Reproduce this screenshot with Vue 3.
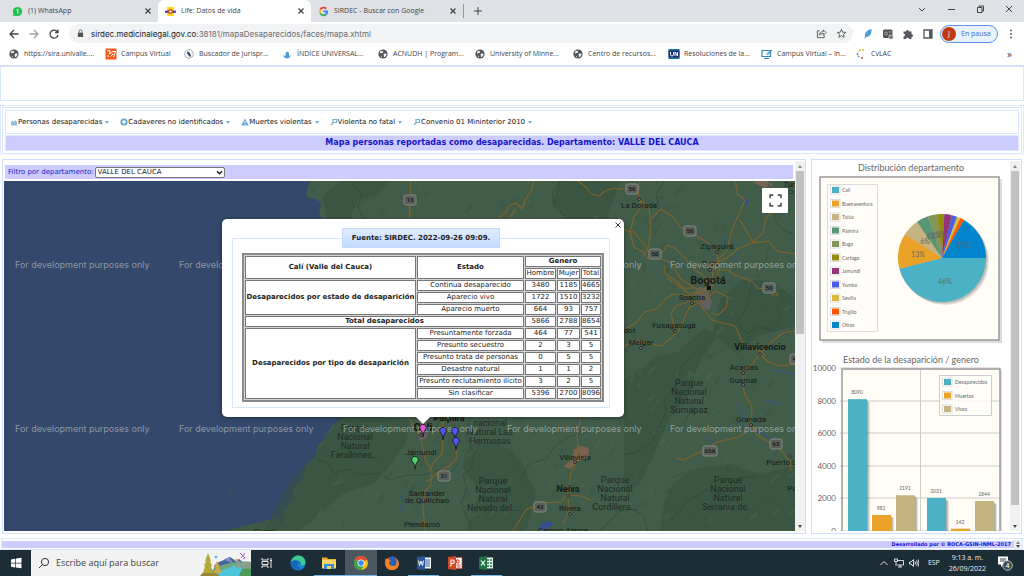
<script setup>
import { ref } from 'vue'

const tabs = [
  { title: '(1) WhatsApp', icon: 'wa' },
  { title: 'Life: Datos de vida', icon: 'life', active: true },
  { title: 'SIRDEC - Buscar con Google', icon: 'google' },
]

const bookmarks = [
  { t: 'https://sira.univalle....', i: 'globe' },
  { t: 'Campus Virtual', i: 'campus' },
  { t: 'Buscador de Jurispr...', i: 'court' },
  { t: 'ÍNDICE UNIVERSAL...', i: 'un' },
  { t: 'ACNUDH | Program...', i: 'globe' },
  { t: 'University of Minne...', i: 'globe' },
  { t: 'Centro de recursos...', i: 'globe' },
  { t: 'Resoluciones de la...', i: 'unbox' },
  { t: 'Campus Virtual – In...', i: 'screen' },
  { t: 'CvLAC', i: 'cvlac' },
]

const menu = [
  { t: 'Personas desaparecidas', i: 'home' },
  { t: 'Cadaveres no identificados', i: 'plus' },
  { t: 'Muertes violentas', i: 'alert' },
  { t: 'Violenta no fatal', i: 'find' },
  { t: 'Convenio 01 Mininterior 2010', i: 'find' },
]

const departamento = ref('VALLE DEL CAUCA')

const estados = [
  ['Continua desaparecido', 3480, 1185, 4665],
  ['Aparecio vivo', 1722, 1510, 3232],
  ['Aparecio muerto', 664, 93, 757],
]
const tipos = [
  ['Presuntamente forzada', 464, 77, 541],
  ['Presunto secuestro', 2, 3, 5],
  ['Presunto trata de personas', 0, 5, 5],
  ['Desastre natural', 1, 1, 2],
  ['Presunto reclutamiento ilícito', 3, 2, 5],
  ['Sin clasificar', 5396, 2700, 8096],
]

const roads = [
  'M410 181l1 12-2 14 3 14M410 207l-1 12',
  'M534 181l-3 10-6 9-3 9-6-6-6 2-4 7-10 8M508 219l8-10',
  'M578 181l8 6 5 7 8 2 6-5 9-3 6 1 12 0 9-3',
  'M640 181l-2 14 3 12-7 10-4 14 4 16 9 5 6 8M640 200l9 8 2 22-3 18-5 8',
  'M651 219l10-10 12 8 8 11 10 4 9 6 7 4 9 10 4 15-3 11-6 10-9 5-14 0-15-11-6-4',
  'M624 230l10 2 9 11 8 11 10 5 10 4 10 16 12 8 8 3',
  'M661 254l7-9 8 4 10 10 7 9 12 9 3 8',
  'M665 266l-1 7 12 8 8 7 11 0',
  'M735 181l3 14 7 5-8 18-6 14-4 19-9 8-5 12-1 14-7 16',
  'M740 220l6 10 7 12 10-9 2-13 6-8 8-3 1-14',
  'M795 254l-18-3-8-10-16 2-14 5-12 10-15 6',
  'M718 270l10 0 7 5 11 4 7 3 5 7 14-2 6 8-7 0',
  'M624 330l13-8 8-10 12-3 9-11 9-4 13 2 15-6 4-5',
  'M624 346l14-5 12 3 11 2 9-7 9-9 10-22 15-8',
  'M675 329l-4-15 5-8 12-4 10-1 6 9 8 10 14 4 9 2 8 17 10 4 8 5 4 4',
  'M706 300l9-9 13 6-2 11-8 7-7-2',
  'M760 354l8 8 12 4 15-2M762 352l9-10 12-9 12-2',
  'M760 354l-8 10-9 6 0 15 2 10 7 12-1 17-10 12-15 4-11 3-8 7-14 5-9 5-8-2',
  'M751 425l6 10 10 6 14 9 9 11 1 10',
  'M421 418l0 8 1 16 3 17 7 12-1 14-6 6-2 17 3 28',
  'M443 438l-1 16-8 8-5 9M456 448l1 10-8 8-11 6-8 8-4 1',
  'M581 417l-4 18 2 21-8 17-3 20-7 9-21 1-14 7-10 16-7 11M568 495l14 1 9 4M568 495l1 15-6 14',
  'M408 417l5 8 7 10M444 417l-3 18',
]
const minor = [
  'M318 460l10 3 6 10 14-4 12 6 18-2 12 7 16-5 18 0 16-5 10 4 8-10',
  'M470 417l-4 20 8 15-2 16-9 8 4 12-6 15 10 25',
  'M624 455l12-3 16-10 8-17 6-12-1-15 9-9 8-22 10-12',
  'M600 531l20-20 12-2 12 7 4 16',
  'M520 481l10-18 16-4 10-14 14-9 15-3',
  'M768 181l4 17 6 7-4 14 8 10 13 6',
  'M664 181l-8 14 4 18-10 14 6 8',
  'M795 290l-19 18 5 10-9 12-15-4-10 8-10-12 10-14 3-18',
  'M560 181l-8 12 3 14 12 12',
  'M350 181l12 14-4 12 6 12',
  'M672 520l14-18 20-12 22 6 12-18 18-2',
]
const dark = [
  'M385 417l25 4-4 22-14 20-18 20-30 10-44 38h-36l24-46 30-34 22-34z',
  'M340 181h50l-12 14-20 5-8 19h-22l-6-22z',
  'M624 380l34-24 20-4 26-24 14 8-20 28-8 30-20 24-16 36-14 30-16 8z',
  'M470 445l26-4 24 18 16 34-10 38h-60l14-40-18-24z',
  'M690 470l40-6 30 10 35-8v65h-135l6-40z',
  'M720 300l22-20 26 0 27 18v28l-38 10-20 18-24-20z',
  'M560 181h60l-14 38h-40l-14-16z',
]
const water = ['M722 246l4-9 5-5', 'M733 262l4-6 2-6', 'M737 424l8-7-9-15', 'M756 430l22 12', 'M740 425l16 7', 'M771 370l24 4', 'M765 400l16 4', 'M706 438l10 5', 'M402 496l2 7-4 6 2 2', 'M630 262l3 5', 'M580 417l-2 6', 'M688 236l4-5']

/* Deterministic pseudo-random relief strokes for the terrain */
let seed = 17
const rnd = () => {
  seed = (seed * 16807) % 2147483647
  return seed / 2147483647
}
const relief = Array.from({ length: 420 }, () => {
  const x = Math.round(310 + rnd() * 480)
  const y = Math.round(181 + rnd() * 345)
  const w = Math.round(2 + rnd() * 6)
  const h = Math.round(2 + rnd() * 8)
  return { d: `M${x} ${y}l${w} -${h}l2 2l-${w} ${h}z`, c: rnd() > 0.72 ? 'hi' : rnd() > 0.4 ? 'lo' : 'mid' }
})

const places = [
  ['La Dorada', 639, 208], ['Zipaquirá', 717, 249], ['Chía', 710, 266], ['Soacha', 692, 300], ['Fusagasugá', 674, 328],
  ['Girardot', 621, 333], ['Melgar', 641, 345], ['Acacías', 744, 370], ['Guamal', 743, 383],
  ['Granada', 751, 422], ['Puerto López', 790, 465], ['Villavieja', 575, 460], ['Rivera', 570, 511],
  ['Campo Alegre', 563, 533], ['Jamundí', 421, 455], ['Santander', 427, 496], ['de Quilichao', 427, 503],
  ['Piendamó', 422, 527], ['Guapi', 264, 534], ['Tunja', 793, 187], ['Puerto Rico', 808, 491],
]
const cities = [['Bogotá', 708, 284, 'xl'], ['Cali', 423, 431, 'xl'], ['Villavicencio', 760, 350, 'lg'], ['Neiva', 568, 492, 'lg'], ['Palmira', 449, 421, 'lg']]
const parks = [
  { x: 689, y: 386, l: ['Parque', 'Nacional', 'Natural', 'Sumapaz'] },
  { x: 728, y: 483, l: ['Parque', 'Nacional', 'Natural', 'Serranía de...'] },
  { x: 615, y: 483, l: ['Parque', 'Nacional', 'Natural', 'Cordillera...'] },
  { x: 493, y: 484, l: ['Parque', 'Nacional', 'Natural', 'Nevado del...'] },
  { x: 355, y: 431, l: ['Parque', 'Nacional', 'Natural', 'Farallones...'] },
  { x: 490, y: 426, l: ['nacional', 'Natural Las', 'Hermosas'] },
]
const shields = [['13', 410, 200], ['56', 632, 189], ['56', 690, 231], ['50', 655, 254], ['50', 769, 288], ['65', 776, 444], ['65A', 710, 451], ['31', 444, 476], ['43', 540, 507], ['40', 796, 359]]
const dots = [[639, 199], [717, 252], [710, 270], [692, 303], [675, 331], [641, 348], [743, 373], [743, 385], [751, 425], [760, 354], [568, 496], [570, 514], [575, 462], [421, 435], [791, 192], [790, 456]]
const marks = [15, 179, 343, 507, 670]
const pins = [['#43c95c', 448, 423], ['#5457ef', 443, 440], ['#5457ef', 455, 440], ['#5457ef', 456, 450], ['#4fd06b', 415, 469], ['#e254d8', 423, 437]]

const ciudades = [
  ['Cali', '#4bb2c5', 166], ['Buenaventura', '#eaa228', 46.5], ['Tulúa', '#c5b47f', 23], ['Palmira', '#579575', 16],
  ['Buga', '#839557', 12], ['Cartago', '#958c12', 9.5], ['Jamundí', '#953579', 10], ['Yumbo', '#4b5de4', 7],
  ['Sevilla', '#d8b83f', 5], ['Trujillo', '#ff5800', 5], ['Otros', '#0085cc', 60],
]
const point = (a, r) => `${(942 + r * Math.cos((a * Math.PI) / 180)).toFixed(2)} ${(258 + r * Math.sin((a * Math.PI) / 180)).toFixed(2)}`
let angle = 0
const slices = ciudades.map(([name, color, size]) => {
  const from = angle
  angle += size
  return { name, color, d: `M942 258L${point(from, 44)}A44 44 0 0 1 ${point(angle, 44)}Z` }
})
const percents = [['46%', 945, 284], ['13%', 918, 257], ['6%', 925, 244], ['4%', 931, 239], ['3%', 936, 238], ['3%', 941, 237], ['17%', 963, 248]]

const axis = [10000, 8000, 6000, 4000, 2000, 0]
const yOf = (v) => 531 - v * 0.0163
const bars = [
  [8090, 848, '#4bb2c5'], [982, 872, '#eaa228'], [2191, 896, '#c5b47f'],
  [2031, 927, '#4bb2c5'], [142, 951, '#eaa228'], [1844, 975, '#c5b47f'],
]
const series = [['Desaparecidos', '#4bb2c5'], ['Muertos', '#eaa228'], ['Vivos', '#c5b47f']]
</script>

<template>
  <div class="screen">
    <header class="browser">
      <div class="tabs">
        <div v-for="t in tabs" :key="t.title" class="tab" :class="{ active: t.active }">
          <svg class="fav" viewBox="0 0 12 12" aria-hidden="true">
            <g v-if="t.icon === 'wa'"><circle cx="6" cy="6" r="5" fill="#1fbf4e" /><path d="M1 11l1-4 3 3z" fill="#1fbf4e" /><path d="M5 4.500L6.400 3.500V8.600" stroke="#fff" fill="none" /></g>
            <g v-else-if="t.icon === 'life'"><path d="M2 1h8v10H2z" fill="#fcd91c" /><path d="M0 5h12v2.500H0z" fill="#5348a0" /><circle cx="6" cy="6" r="2.600" fill="#e2452f" /><circle cx="6" cy="6" r="1.200" fill="#fff" /></g>
            <g v-else fill="none" stroke-width="2"><path d="M9 3A4 4 0 0 0 2.500 4" stroke="#ea4335" /><path d="M2.500 4a4 4 0 0 0 0 4" stroke="#fbbc05" /><path d="M2.500 8A4 4 0 0 0 8.500 9.200" stroke="#34a853" /><path d="M8.500 9.200A4 4 0 0 0 10 6H6" stroke="#4285f4" /></g>
          </svg>
          <span>{{ t.title }}</span>
          <button class="plain x" aria-label="Cerrar pestaña"><svg viewBox="0 0 8 8"><path d="M2 2l4 4M6 2L2 6" /></svg></button>
        </div>
        <button class="plain new" aria-label="Nueva pestaña"><svg viewBox="0 0 10 10"><path d="M5 1v8M1 5h8" /></svg></button>
        <div class="wincontrols">
          <button class="plain" aria-label="Buscar pestañas"><svg viewBox="0 0 10 10"><path d="M2 4l3 3 3-3" /></svg></button>
          <button class="plain" aria-label="Minimizar"><svg viewBox="0 0 10 10"><path d="M2 5.500h7" /></svg></button>
          <button class="plain" aria-label="Restaurar"><svg viewBox="0 0 10 10"><path d="M2.500 3.500h4.500v5h-4.500zM4 3.500V2h4.500v5H7" /></svg></button>
          <button class="plain" aria-label="Cerrar"><svg viewBox="0 0 10 10"><path d="M2 2l6 6M8 2L2 8" /></svg></button>
        </div>
      </div>
      <div class="toolbar">
        <button class="plain nav" aria-label="Atrás"><svg viewBox="0 0 12 12"><path d="M10.500 6H2M6 2L2 6l4 4" /></svg></button>
        <button class="plain nav off" aria-label="Adelante"><svg viewBox="0 0 12 12"><path d="M1.500 6H10M6 2l4 4-4 4" /></svg></button>
        <button class="plain nav" aria-label="Recargar"><svg viewBox="0 0 12 12"><path d="M9.600 4.200A4 4 0 1 0 10 7M10 1.500v3H7" /></svg></button>
        <div class="address">
          <svg class="lock" viewBox="0 0 8 10"><path d="M1 4h6v5H1z" fill="#555" /><path d="M2.300 4V2.500a1.700 1.700 0 0 1 3.400 0V4" fill="none" stroke="#555" /></svg>
          <span class="url"><b>sirdec.medicinalegal.gov.co</b>:38181/mapaDesaparecidos/faces/mapa.xhtml</span>
          <svg class="ic" viewBox="0 0 12 12"><path d="M4 3H1.500v7.500H9V8M3.500 8c0-3 2-4 4.500-4V2l3 3-3 3V6C6 6 4.500 6.500 3.500 8z" /></svg>
          <svg class="ic star" viewBox="0 0 12 12"><path d="M6 1.500l1.300 3.100 3.300.2-2.500 2.200.8 3.200L6 8.400 3.100 10.200l.8-3.200L1.400 4.800l3.300-.2z" /></svg>
        </div>
        <div class="extensions">
          <svg viewBox="0 0 12 12"><path d="M9.500 1C5 2 2.500 5 3 8.500L2 11l2-2c3.500 0 6-3 5.500-8z" fill="#4a9fd6" /></svg>
          <svg viewBox="0 0 12 12"><rect x="1" y="1.500" width="9.500" height="8.500" rx="1.500" fill="#4d5054" /><circle cx="4" cy="5.500" r="1.500" fill="none" stroke="#ccc" stroke-width=".7" /><path d="M6.500 4h3M7 7h4v4H7z" stroke="#ddd" stroke-width=".7" fill="#777" /></svg>
          <svg viewBox="0 0 12 12"><path d="M1.500 3.500H4a1.500 1.500 0 1 1 3 0h2.500V6a1.500 1.500 0 1 1 0 3v2H7a1.500 1.500 0 0 0-3 0H1.500V8.500a1.500 1.500 0 0 0 0-3z" fill="#55585c" /></svg>
          <svg viewBox="0 0 12 12"><path d="M2 2h8v8H2z" fill="#fff" stroke="#55585c" stroke-width="1.300" /><path d="M7 2h3v8H7z" fill="#55585c" /></svg>
        </div>
        <button class="profile"><i>J</i><span>En pausa</span></button>
        <button class="plain dots" aria-label="Menú"><svg viewBox="0 0 4 12"><g fill="#555"><circle cx="2" cy="2.500" r=".9" /><circle cx="2" cy="6" r=".9" /><circle cx="2" cy="9.500" r=".9" /></g></svg></button>
      </div>
      <nav class="bookmarks">
        <a v-for="(b, n) in bookmarks" :key="n" href="#">
          <svg viewBox="0 0 12 12" aria-hidden="true">
            <g v-if="b.i === 'globe'"><circle cx="6" cy="6" r="4.600" fill="#505357" /><path d="M3 3.500l2-.8 1.500 1-1 1.300H4l-.8 1zM6.500 6l2-.8 1.200 1-1.200 2.300-1.500.8zM3.500 7.500l1.500.8v1.500z" fill="#eee" /></g>
            <g v-else-if="b.i === 'campus'"><path d="M.5.5h11v11H.5z" fill="#f4591c" /><path d="M2 3l3-.5L4.500 6 8 3.500h2.500L8.500 9M5.500 8.500L8 6M2 8h2" stroke="#fff" stroke-width="1" fill="none" /></g>
            <g v-else-if="b.i === 'court'"><circle cx="6" cy="6" r="4.400" fill="#f4f5f7" stroke="#9aa3ae" stroke-width=".8" /><path d="M4 3.500l2.500 1 1.500 3.500-1 1L4.500 6z" fill="#29415e" /></g>
            <g v-else-if="b.i === 'un'"><path d="M2 7c1 2.500 2.200 3.500 4 3.500s3-1 4-3.500l-2 1V5L6.500 3.500 4.500 5v3z" fill="#4d9fd4" /></g>
            <g v-else-if="b.i === 'unbox'"><path d="M.5 1h11v10H.5z" fill="#177e85" /><path d="M.5 2.500h11v7H.5z" fill="#1c2c7c" /><path d="M2.500 4v2.500Q2.500 8 4 8T5.500 6.500V4M7 8V4l2.500 4V4" stroke="#fff" fill="none" /></g>
            <g v-else-if="b.i === 'screen'"><path d="M1 2.500h8.500v6H1zM3 10.500h5" fill="none" stroke="#2f88b5" stroke-width="1.200" /><path d="M5 6l5.500-4.500 1 1L7 7z" fill="#4ea5cf" /></g>
            <g v-else fill="none" stroke-width="1.500"><path d="M9 2A5 5 0 0 0 3 4" stroke="#e8b23a" stroke-dasharray="2 1" /><path d="M2.500 5a5 5 0 0 0 1.500 4" stroke="#5582c9" stroke-dasharray="2 1" /><path d="M6 10h3" stroke="#d9412b" stroke-dasharray="2 1" /></g>
          </svg>
          <span>{{ b.t }}</span>
        </a>
        <button class="plain more" aria-label="Más marcadores">»</button>
      </nav>
    </header>

    <main class="page">
      <div class="banner"></div>
      <section class="north">
        <div class="north-in">
          <nav class="menu">
            <a v-for="m in menu" :key="m.t" href="#">
              <svg viewBox="0 0 8 8" aria-hidden="true">
                <path v-if="m.i === 'home'" d="M1 4L2.500 2.500 4 4l1.500-2L7 4v3.500H1z" fill="#8fc0dc" />
                <g v-else-if="m.i === 'plus'"><circle cx="4" cy="4" r="3.600" fill="#5ea6cf" /><path d="M4 2v4M2 4h4" stroke="#fff" stroke-width="1.300" /></g>
                <g v-else-if="m.i === 'alert'"><path d="M4 .5L7.800 7.500H.2z" fill="#62a9d0" /><path d="M4 3v2M4 5.800v1" stroke="#fff" /></g>
                <path v-else d="M1 7l2.200-2.500M3 1.500h3.500v3H3z" stroke="#74b2d6" stroke-width="1.200" fill="none" />
              </svg>
              <span>{{ m.t }}</span>
              <i class="caret"></i>
            </a>
          </nav>
          <h1>Mapa personas reportadas como desaparecidas. Departamento: VALLE DEL CAUCA</h1>
        </div>
      </section>

      <div class="columns">
        <section class="panel left">
          <div class="body">
            <div class="filter">
              <label for="depto">Filtro por departamento:</label>
              <span class="pick">
                <select id="depto" v-model="departamento"><option>VALLE DEL CAUCA</option></select>
                <svg viewBox="0 0 8 6"><path d="M1 1.500l3 3 3-3" /></svg>
              </span>
            </div>
            <div class="map">
              <svg class="canvas" viewBox="4 181 791 350" preserveAspectRatio="xMidYMid slice">
                <path d="M4 181h791v350H4z" fill="#34486b" />
                <path d="M310 181l-3 9-1 7 10 2 5 4-2 10 4 10 6 40-8 50 16 60 8 44-12 8-8 14-7 7-3 12-8 6-5 16-9 8 1 12-9 8-3 15-8 6-12 1-3 7h-12H795V181z" fill="#425c4a" />
                <path d="M222 531l18-4 40-10v14zM228 492l3-4-1 6z" fill="#3e5846" />
                <path v-for="(d, n) in dark" :key="'k' + n" :d="d" fill="#37503f" opacity=".6" />
                <path v-for="(r, n) in relief" :key="'r' + n" :d="r.d" class="relief" :class="r.c" />
                <path d="M698 287l8 1 6 14-3 9-7-4-3-9-7-3z" fill="#606061" /><path d="M753 182l14-2 6 5-9 3z M574 450l6-4 9 2-1 10-11 4-7 7-6-3 8-7z" fill="#786450" />
                <path d="M419 424l10 2-2 12-8 3z" fill="#606061" />
                <path v-for="(d, n) in water" :key="'w' + n" :d="d" class="water" />
                <path d="M743 198l6 2-1 5-4-1zM540 525l6-4 8 2-4 4-9 3z" fill="#35518c" />
                <path v-for="(d, n) in minor" :key="'m' + n" :d="d" class="minor" />
                <path v-for="(d, n) in roads" :key="'d' + n" :d="d" class="road" />
                <circle v-for="(c, n) in dots" :key="'c' + n" :cx="c[0]" :cy="c[1]" r="1.500" class="town" />
                <path d="M707 286h4v4h-4z" fill="#111" />
                <g v-for="(s, n) in shields" :key="'s' + n">
                  <rect :x="s[1] - (s[0].length > 2 ? 7 : 6)" :y="s[2] - 5" :width="s[0].length > 2 ? 14 : 12" height="10" rx="2" class="shield" />
                  <text :x="s[1]" :y="s[2] + 2" class="num">{{ s[0] }}</text>
                </g>
                <text v-for="p in places" :key="p[0]" :x="p[1]" :y="p[2]" class="place">{{ p[0] }}</text>
                <text v-for="c in cities" :key="c[0]" :x="c[1]" :y="c[2]" class="place" :class="c[3]">{{ c[0] }}</text>
                <g v-for="(p, n) in parks" :key="'p' + n">
                  <text v-for="(l, k) in p.l" :key="k" :x="p.x" :y="p.y + k * 9" class="park">{{ l }}</text>
                </g>
                <template v-for="y in [268, 432]" :key="y">
                  <text v-for="x in marks" :key="x" :x="x" :y="y" class="mark">For development purposes only</text>
                </template>
                <path v-for="(p, n) in pins" :key="'i' + n" :d="`M${p[1]} ${p[2]}l-1-5-2-3a3.300 3.300 0 1 1 6 0l-2 3z`" :fill="p[0]" stroke="#111" stroke-width=".8" />
              </svg>

              <button class="full" aria-label="Pantalla completa"><svg viewBox="0 0 12 12"><path d="M1 4V1h3M8 1h3v3M11 8v3H8M4 11H1V8" /></svg></button>

              <div class="info">
                <button class="plain close" aria-label="Cerrar"><svg viewBox="0 0 8 8"><path d="M1.500 1.500l5 5M6.500 1.500l-5 5" /></svg></button>
                <fieldset>
                  <legend>Fuente: SIRDEC. 2022-09-26 09:09.</legend>
                  <table>
                    <colgroup><col class="c1" /><col class="c2" /><col class="c3" /><col class="c4" /><col class="c5" /></colgroup>
                    <tbody>
                      <tr><th rowspan="2">Calí (Valle del Cauca)</th><th rowspan="2">Estado</th><th colspan="3">Genero</th></tr>
                      <tr><td>Hombre</td><td>Mujer</td><td>Total</td></tr>
                      <tr v-for="(r, n) in estados" :key="r[0]">
                        <th v-if="n === 0" rowspan="3">Desaparecidos por estado de desaparición</th>
                        <td v-for="(c, k) in r" :key="k">{{ c }}</td>
                      </tr>
                      <tr><th colspan="2">Total desaparecidos</th><td>5866</td><td>2788</td><td>8654</td></tr>
                      <tr v-for="(r, n) in tipos" :key="r[0]">
                        <th v-if="n === 0" rowspan="6">Desaparecidos por tipo de desaparición</th>
                        <td v-for="(c, k) in r" :key="k">{{ c }}</td>
                      </tr>
                    </tbody>
                  </table>
                </fieldset>
              </div>
            </div>
          </div>
          <div class="scroll"><i class="up"></i><b class="half"></b><i class="down"></i></div>
        </section>

        <section class="panel right">
          <div class="body">
            <h2>Distribución departamento</h2>
            <svg class="chart" viewBox="812 175 198 178">
              <path d="M822 179h180v164h-180z" fill="#ddd" />
              <path d="M820 177h179v163H820z" fill="#fffdf6" stroke="#999" stroke-width="1.500" />
              <path d="M827.500 184.500h50v147h-50z" fill="#fffdf9" stroke="#ddd" />
              <g v-for="(s, n) in slices" :key="s.name">
                <rect x="830.500" :y="186 + n * 13.500" width="9.500" height="8" fill="#fff" stroke="#ddd" />
                <rect x="832" :y="187 + n * 13.500" width="7" height="6" :fill="s.color" />
                <text x="842" :y="192 + n * 13.500" class="tiny">{{ s.name }}</text>
              </g>
              <g fill="#000" fill-opacity=".1"><circle cx="943" cy="259" r="44" /><circle cx="944" cy="260" r="44" /><circle cx="945" cy="261" r="44" /></g>
              <path v-for="s in slices" :key="'s' + s.name" :d="s.d" :fill="s.color" />
              <text v-for="(p, n) in percents" :key="'t' + n" :x="p[1]" :y="p[2]" class="pct">{{ p[0] }}</text>
            </svg>
            <h2>Estado de la desaparición / genero</h2>
            <svg class="chart" viewBox="812 367 198 171">
              <path d="M844 371h158v167H844z" fill="#ddd" />
              <path d="M842 369h158v170H842z" fill="#fffdf6" />
              <g v-for="v in axis" :key="v">
                <path :d="`M840 ${Math.round(yOf(v))}H1000`" stroke="#ccc" />
                <text x="836" :y="yOf(v) + 3" class="axis">{{ v }}</text>
              </g>
              <path d="M920.500 369v162" stroke="#ccc" />
              <path d="M842 531V369h158v162" fill="none" stroke="#999" stroke-width="1.500" />
              <g v-for="b in bars" :key="b[0]">
                <g fill="#000" fill-opacity=".12"><rect v-for="k in 3" :key="k" :x="b[1] + k" :y="yOf(b[0]) + k" width="19" :height="531 - yOf(b[0])" /></g>
                <rect :x="b[1]" :y="yOf(b[0])" width="19" :height="531 - yOf(b[0])" :fill="b[2]" />
                <text :x="b[1] + 9" :y="yOf(b[0]) - 5" class="val">{{ b[0] }}</text>
              </g>
              <path d="M939.500 375.500h52v40h-52z" fill="#fffdf9" fill-opacity=".8" stroke="#ccc" />
              <g v-for="(s, n) in series" :key="s[0]">
                <rect x="942.500" :y="378 + n * 13.500" width="9.500" height="8" fill="#fff" stroke="#ddd" />
                <rect x="944" :y="379 + n * 13.500" width="7" height="6" :fill="s[1]" />
                <text x="955" :y="384 + n * 13.500" class="tiny">{{ s[0] }}</text>
              </g>
            </svg>
          </div>
          <div class="scroll"><i class="up"></i><b class="most"></b><i class="down"></i></div>
        </section>
      </div>

      <footer class="foot"><span>Desarrollado por © ROCA-GSIN-INML-2017</span><div class="spin"><i class="up"></i><i class="down"></i></div></footer>
    </main>

    <div class="taskbar">
      <button class="plain start" aria-label="Inicio"><svg viewBox="0 0 12 12"><path d="M1 2.400L5.300 1.700V5.700H1zM6 1.600L11.500.8V5.700H6zM1 6.400H5.300V10.400L1 9.700zM6 6.400H11.500V11.300L6 10.500z" fill="#fff" /></svg></button>
      <div class="search">
        <svg viewBox="0 0 12 12"><circle cx="7" cy="5" r="3.600" /><path d="M4.400 7.600L1 11" /></svg>
        <input type="text" placeholder="Escribe aquí para buscar" aria-label="Escribe aquí para buscar" />
        <svg class="scene" viewBox="200 551 51 25">
          <path d="M214 566c5-6 8-4 11-7l5-2 6 4 3-2 5 4 7 2v8h-37z" fill="#47639a" />
          <path d="M224 560l5-3 4 6zM237 559l4 4h-6z" fill="#7e91bd" />
          <path d="M212 570c10-7 26-9 39-8v14h-40z" fill="#6aa77c" /><path d="M232 566c8-5 14-5 19-4v6c-6 2-12 1-19-2z" fill="#8a9e8c" />
          <path d="M214 576c3-7 14-6 21-11 4 4-7 5-4 11z" fill="#4fc4dd" /><path d="M231 576c1-6 10-8 20-7v7z" fill="#4d9b57" /><path d="M214 576c4-6 18-6 26-9 4 2 0 5-1 9z" fill="#4fc4dd" />
          <path d="M200 576c3-5 9-6 16-3l4 3z" fill="#98843a" />
          <path d="M208 553l-3 8h1l-2 5h1l-2 7h10l-2-7h1l-2-5h1z" fill="#b3a83c" /><path d="M217 561l-3 7h2l-3 5h9l-3-6h1z" fill="#c9ab42" />
          <circle cx="216" cy="557" r="1.300" fill="#4bbbe4" /><circle cx="236" cy="560" r="1.300" fill="#f2b632" /><path d="M240 553l5 5M245 553l-4 5M243 559l2-1" stroke="#b259d1" />
        </svg>
      </div>
      <div class="apps">
        <button class="plain" aria-label="Vista de tareas"><svg viewBox="0 0 16 16"><path d="M3 3v2h6V3M3 13v-2h6v2M3 6.500h6v3H3zM12 3v10M11 5.500h2" fill="none" stroke="#e8e8e8" /></svg></button>
        <button class="plain" aria-label="Edge"><svg viewBox="0 0 16 16"><circle cx="8" cy="8" r="7.500" fill="#1583d2" /><path d="M1 7C2 2 6 .5 8 .5c5 0 7.500 3.500 7.500 6.500s-3 4-5 3.500c1-1 .5-5-3-5C4 5.500 2 7 1 7z" fill="#40c790" /><path d="M1 7c3-3 8-2 8 1-3 0-3 4 2 5.500C7 16 1.500 14 .5 8z" fill="#1665b8" /></svg></button>
        <button class="plain run" aria-label="Explorador de archivos"><svg viewBox="0 0 16 16"><path d="M1 2.500h5l1 1.500h8v9H1z" fill="#e9b23a" /><path d="M1 5h14v8.500H1z" fill="#fbd66b" /><path d="M3 9h10v5H3z" fill="#3a8fd1" /><path d="M6 11h4v3H6z" fill="#fbd66b" /></svg></button>
        <button class="plain run cur" aria-label="Chrome"><svg viewBox="0 0 16 16"><circle cx="8" cy="8" r="7" fill="#fbc116" /><path d="M8 8L1.900 4.500A7 7 0 0 1 14.100 4.500z" fill="#df4a37" /><path d="M8 8L1.900 4.500A7 7 0 0 0 8 15l3-5z" fill="#31a350" /><circle cx="8" cy="8" r="3.500" fill="#fff" /><circle cx="8" cy="8" r="2.700" fill="#4285f4" /></svg></button>
        <button class="plain" aria-label="Firefox"><svg viewBox="0 0 16 16"><circle cx="8" cy="8.500" r="6.800" fill="#e8581f" /><circle cx="8.500" cy="6.500" r="5" fill="#2f62b5" /><path d="M1.500 3.500C3 4 4 3.500 5 4c-.5 1 1 1.500 2.500 2-3 .5-3 2.500-1.500 4 2 1.800 5 1.200 6.200-.5 1-2 .3-5-.7-6.500 3 2 4 5 3 8-1.500 4-8 5.500-11.500 2C1 10.500.8 7 1.500 3.500z" fill="#f58220" /></svg></button>
        <button class="plain run" aria-label="Word"><svg viewBox="0 0 16 16"><path d="M7 2.500h8v11H7z" fill="#fff" /><path d="M9 5h5M9 7h5M9 9h5M9 11h5" stroke="#2b579a" /><path d="M1 2l8-1v14l-8-1z" fill="#2b579a" /><path d="M2.500 5.500l1 5L5 6l1.500 4.500 1-5" stroke="#fff" fill="none" /></svg></button>
        <button class="plain" aria-label="PowerPoint"><svg viewBox="0 0 16 16"><path d="M7 2.500h8v11H7z" fill="#fff" stroke="#d24726" stroke-width=".6" /><path d="M9.500 5h2.500v3H9.500zM9.500 10h4M9.500 12h4" stroke="#d24726" fill="none" /><path d="M1 2l8-1v14l-8-1z" fill="#d24726" /><path d="M4 11.500V5h1.500a1.700 1.700 0 0 1 0 3.500H4" stroke="#fff" fill="none" stroke-width="1.200" /></svg></button>
        <button class="plain run" aria-label="Excel"><svg viewBox="0 0 16 16"><path d="M7 2.500h8v11H7z" fill="#e8f1eb" /><path d="M9 5h2M12 5h2M9 8h2M12 8h2M9 11h2M12 11h2" stroke="#217346" stroke-width="1.500" /><path d="M1 2l8-1v14l-8-1z" fill="#217346" /><path d="M3 5.500l4 5M7 5.500l-4 5" stroke="#fff" stroke-width="1.200" /></svg></button>
      </div>
      <div class="tray">
        <svg viewBox="0 0 10 10"><path d="M1.500 7L5 3.500 8.500 7" /></svg>
        <svg viewBox="0 0 10 10"><path d="M3 2.500h6.500V7H3M6 7v2M4 9h4M.5 1h3v2.500h-3zM2 3.500V8" /></svg>
        <svg viewBox="0 0 10 10"><path d="M.5 4h1.500l2.500-2.500v7L2 6H.5zM6 3.500q1 1.500 0 3M7.500 2.500q2 2.500 0 5M9 1.500q2 3.500 0 7" /></svg>
        <span class="lang">ESP</span>
        <div class="clock"><span>9:13 a. m.</span><span>26/09/2022</span></div>
        <svg class="note" viewBox="0 0 16 16"><path d="M1 1.500h10v8H6L4 12V9.500H1z" fill="#fff" stroke="none" /><path d="M3 4h6M3 6h6" stroke="#1c2d36" /><circle cx="10.500" cy="10.500" r="4.800" fill="#3d4a52" stroke="#ddd" stroke-width=".8" /><text x="10.500" y="13">4</text></svg>
      </div>
    </div>
  </div>
</template>

<style>
html,
body {
  margin: 0;
  overflow: hidden;
}
</style>

<style scoped>
* {
  box-sizing: border-box;
}
.screen {
  height: 100vh;
  display: flex;
  flex-direction: column;
  background: #fff;
  font: 7px/10px "Open Sans", sans-serif;
  color: #444;
}
svg {
  display: block;
  flex: none;
}
a {
  color: inherit;
  text-decoration: none;
}
.plain {
  border: 0;
  padding: 0;
  margin: 0;
  background: none;
  color: inherit;
  font: inherit;
  display: grid;
  place-items: center;
}
.plain svg {
  fill: none;
  stroke: #444;
}

/* Browser chrome */
.browser {
  border-bottom: 1px solid #dcdde0;
}
.tabs {
  display: flex;
  height: 22px;
  background: #dee1e6;
}
.tab {
  width: 153px;
  display: flex;
  align-items: center;
  gap: 5px;
  padding: 0 5px 0 7px;
}
.tab:first-child {
  width: 158px;
  padding-left: 12px;
}
.tab:nth-child(3) {
  border-right: 1px solid #999;
  border-image: linear-gradient(transparent 5px, #999 5px, #999 17px, transparent 17px) 1;
}
.tab.active {
  background: #fff;
  border-radius: 6px 6px 0 0;
}
.tab span {
  flex: 1;
}
.fav {
  width: 11px;
  height: 11px;
}
.x svg {
  width: 10px;
  height: 10px;
}
.new {
  width: 28px;
}
.new svg,
.wincontrols svg {
  width: 10px;
  height: 10px;
}
.wincontrols {
  margin: 0 1px 0 auto;
  display: flex;
  height: 18px;
}
.wincontrols button {
  width: 29px;
}
.toolbar {
  display: flex;
  align-items: center;
  height: 23px;
  padding: 0 11px 0 8px;
}
.nav svg {
  width: 12px;
  height: 12px;
  stroke-width: 1.3;
}
.nav {
  width: 20px;
  justify-items: start;
}
.off {
  opacity: 0.5;
}
.address {
  flex: 1;
  display: flex;
  align-items: center;
  height: 19px;
  margin-left: 1px;
  padding: 0 6px 0 8px;
  border-radius: 10px;
  background: #f1f3f4;
}
.lock {
  width: 7px;
  height: 9px;
}
.url {
  flex: 1;
  margin-left: 7px;
  font: 8px/12px Inter, sans-serif;
  color: #6a6d71;
}
.url b {
  font-weight: 400;
  color: #222;
}
.ic {
  width: 11px;
  height: 11px;
  margin-left: 9px;
  fill: none;
  stroke: #555;
}
.extensions {
  display: flex;
  gap: 8px;
  margin: 0 6px 0 9px;
}
.extensions svg {
  width: 12px;
  height: 12px;
}
.profile {
  display: flex;
  align-items: center;
  gap: 5px;
  width: 58px;
  height: 18px;
  padding: 0 0 0 1px;
  border: 1px solid #5b95e6;
  border-radius: 9px;
  background: #e9f1fc;
  color: #3f6bc9;
  font: 7px/10px "Open Sans", sans-serif;
  white-space: nowrap;
}
.profile i {
  width: 14px;
  height: 14px;
  border-radius: 7px;
  background: #bf3a12;
  color: #fff;
  font-style: normal;
  line-height: 14px;
}
.dots {
  margin-left: 11px;
}
.dots svg {
  width: 4px;
  height: 12px;
  stroke: none;
}
.bookmarks {
  display: grid;
  grid-template-columns: 97px 78px 98px 96px 97px 98px 96px 93px 94px 1fr auto;
  align-items: center;
  height: 20px;
  padding: 0 12px 3px 8px;
}
.bookmarks a {
  display: flex;
  align-items: center;
  gap: 4px;
  white-space: nowrap;
}
.bookmarks svg {
  width: 12px;
  height: 12px;
}
.more {
  font-size: 10px;
}

/* Page */
.page {
  flex: 1;
  min-height: 0;
  display: flex;
  flex-direction: column;
  font-family: "DejaVu Sans", sans-serif;
}
.banner {
  height: 35px;
  border: 1px solid #d8e6ff;
}
.north {
  margin-top: 4px;
  padding: 1px;
  border: 1px solid #dfeaff;
  border-bottom: 0;
}
.north-in {
  padding: 2px;
  border: 1px solid #d8e6ff;
}
.menu {
  display: flex;
  align-items: center;
  gap: 10px;
  height: 24px;
  padding-left: 4px;
  border: 1px solid #d8e6ff;
  color: #111;
}
.menu a {
  display: flex;
  align-items: center;
  white-space: nowrap;
}
.menu svg {
  width: 8px;
  height: 8px;
}
.caret {
  margin: 0 1px 0 3px;
  border: 2px solid transparent;
  border-top: 3px solid #6fb0d6;
  border-bottom: 0;
}
h1 {
  margin: 1px 0 0;
  border: 1px solid #dde6ff;
  background: #ccccff;
  color: #1414cc;
  text-align: center;
  font-size: 8px;
  line-height: 14px;
}
.columns {
  flex: 1;
  min-height: 0;
  display: flex;
  gap: 5px;
  margin: 4px 2px 0;
}
.panel {
  display: flex;
  border: 1px solid #cfe0ff;
  overflow: hidden;
}
.left {
  flex: 1;
  padding: 1px 0 2px 1px;
}
.right {
  width: 211px;
  padding: 1px 1px 2px 0;
}
.body {
  flex: 1;
  min-width: 0;
  display: flex;
  flex-direction: column;
  overflow: hidden;
}
.filter {
  display: flex;
  align-items: center;
  gap: 1px;
  height: 14px;
  margin: 4px 2px 2px 1px;
  padding-left: 3px;
  background: #ccccff;
  color: #1c1cc8;
}
.pick {
  position: relative;
}
.pick select {
  appearance: none;
  display: block;
  width: 130px;
  height: 11px;
  padding: 0 2px;
  border: 1px solid #777;
  border-radius: 2px;
  background: #fff;
  color: #222;
  font: 7px/9px "DejaVu Sans", sans-serif;
}
.pick svg {
  position: absolute;
  right: 2px;
  top: 3px;
  width: 7px;
  height: 5px;
  fill: none;
  stroke: #111;
  stroke-width: 1.5;
}
.map {
  position: relative;
  flex: 1;
  min-height: 0;
  overflow: hidden;
}
.canvas {
  width: 100%;
  height: 100%;
}
.relief {
  opacity: 0.4;
}
.hi {
  fill: #56653f;
}
.mid {
  fill: #4a6652;
}
.lo {
  fill: #38523f;
}
.water {
  fill: none;
  stroke: #35518c;
}
.road {
  fill: none;
  stroke: #80622b;
  stroke-width: 1.1;
  stroke-linejoin: round;
}
.minor {
  fill: none;
  stroke: #2b4032;
  stroke-width: 0.8;
  stroke-dasharray: 2 1;
}
.town {
  fill: #777;
  stroke: #1c1c1c;
  stroke-width: 0.8;
}
.shield {
  fill: #59605a;
  stroke: #858a84;
}
.num {
  font: 500 6px Roboto, sans-serif;
  text-anchor: middle;
  fill: #111;
}
.place,
.park {
  font: 8px Roboto, sans-serif;
  text-anchor: middle;
  fill: #151a17;
}
.park {
  font-size: 9px;
  fill: #1f2b23;
}
.place.lg {
  font-size: 9px;
  font-weight: 700;
}
.place.xl {
  font-size: 11px;
  font-weight: 700;
}
.mark {
  font: 9px Inter, sans-serif;
  fill: #c9cfc9;
  fill-opacity: 0.6;
}
.full {
  position: absolute;
  top: 7px;
  right: 7px;
  width: 26px;
  height: 25px;
  display: grid;
  place-items: center;
  padding: 0;
  border: 0;
  border-radius: 1px;
  background: #fff;
}
.full svg {
  width: 13px;
  height: 13px;
  fill: none;
  stroke: #555;
  stroke-width: 1.5;
}
.info {
  position: absolute;
  left: 218px;
  top: 38px;
  width: 402px;
  padding: 9px 14px 9px 10px;
  border-radius: 5px;
  background: #fff;
  color: #222;
  box-shadow: 0 1px 4px #0006;
}
.info::after {
  content: "";
  position: absolute;
  left: 194px;
  top: 100%;
  border: 7px solid transparent;
  border-top-color: #fff;
  border-bottom: 0;
}
.close {
  position: absolute;
  right: 2px;
  top: 2px;
}
.close svg {
  width: 8px;
  height: 8px;
}
fieldset {
  min-width: 0;
  margin: 0;
  padding: 5px 7px;
  border: 1px solid #d8e6ff;
}
legend {
  margin: 0 auto;
  padding: 3px 9px;
  border: 1px solid #c5dbfb;
  background: linear-gradient(#dfebff, #c4dcff);
  font-weight: 700;
  line-height: 12px;
}
table {
  table-layout: fixed;
  width: 362px;
  margin-left: 2px;
  border: 2px solid #8a8a8a;
  border-spacing: 1px;
  background: #d4d4d4;
}
.c1 {
  width: 171px;
}
.c2 {
  width: 107px;
}
.c3 {
  width: 31px;
}
.c4 {
  width: 23px;
}
.c5 {
  width: 20px;
}
th,
td {
  padding: 0;
  border: 1px solid #777;
  background: #fff;
  text-align: center;
  line-height: 9px;
  white-space: nowrap;
}
.scroll {
  width: 10px;
  display: flex;
  flex-direction: column;
  align-items: center;
  padding: 4px 0 3px;
  background: #f1f1f1;
}
.scroll b {
  width: 8px;
  margin: 3px 0 auto;
  background: #c1c1c1;
}
.half {
  height: 45%;
}
.most {
  height: 92%;
}
.up,
.down {
  border: 2px solid transparent;
}
.up {
  border-top: 0;
  border-bottom: 3px solid #888;
}
.down {
  border-bottom: 0;
  border-top: 3px solid #444;
}
h2 {
  margin: 0;
  color: #666;
  text-align: center;
  font: 9px/14px Lato, sans-serif;
}
.chart {
  width: 100%;
  overflow: visible;
}
.tiny,
.val {
  font: 5px Lato, sans-serif;
  fill: #666;
}
.val {
  text-anchor: middle;
}
.pct {
  font: 7px Lato, sans-serif;
  fill: #666;
  text-anchor: middle;
}
.axis {
  font: 8px Lato, sans-serif;
  fill: #666;
  text-anchor: end;
}
.foot {
  display: flex;
  align-items: center;
  justify-content: flex-end;
  gap: 3px;
  height: 12px;
  margin: 4px 1px 0;
  border: 1px solid #d8e6ff;
  color: #1414cc;
  background: linear-gradient(#fff 2px, #ccccff 2px, #ccccff 9px, #fff 9px);
  font-weight: 700;
  font-size: 5px;
  line-height: 8px;
}
.spin {
  display: grid;
  gap: 1px;
  padding: 1px 2px;
  background: #eee;
}

/* Taskbar */
.taskbar {
  display: flex;
  height: 26px;
  background: #1c2d36;
  color: #eee;
}
.start {
  width: 31px;
}
.start svg {
  width: 12px;
  height: 12px;
  stroke: none;
}
.search {
  display: flex;
  align-items: center;
  width: 220px;
  background: #f2f2f2;
}
.search > svg:first-child {
  width: 12px;
  height: 12px;
  margin: 0 6px 0 7px;
  fill: none;
  stroke: #333;
}
.search input {
  flex: 1;
  min-width: 0;
  padding: 0;
  border: 0;
  background: none;
  font: 9px/14px "Open Sans", sans-serif;
}
.search input::placeholder {
  color: #444;
  opacity: 1;
}
.search .scene {
  width: 51px;
  height: 25px;
}
.apps {
  display: flex;
  width: 251px;
}
.apps button {
  flex: 1;
  border-bottom: 1px solid transparent;
}
.apps .run {
  border-bottom-color: #76b9ed;
}
.apps .cur {
  background: #4b585f;
}
.apps svg {
  width: 16px;
  height: 16px;
  stroke: none;
}
.tray {
  display: flex;
  align-items: center;
  gap: 5px;
  margin-left: auto;
  padding-right: 11px;
}
.tray > svg {
  width: 10px;
  height: 10px;
  fill: none;
  stroke: #eee;
  stroke-width: 0.9;
}
.lang {
  margin: 0 4px;
}
.clock {
  display: grid;
  text-align: center;
  line-height: 11px;
}
.tray > .note {
  width: 16px;
  height: 16px;
  margin-left: 6px;
}
.note text {
  font: 7px Roboto, sans-serif;
  text-anchor: middle;
  fill: #fff;
  stroke: none;
}
</style>
